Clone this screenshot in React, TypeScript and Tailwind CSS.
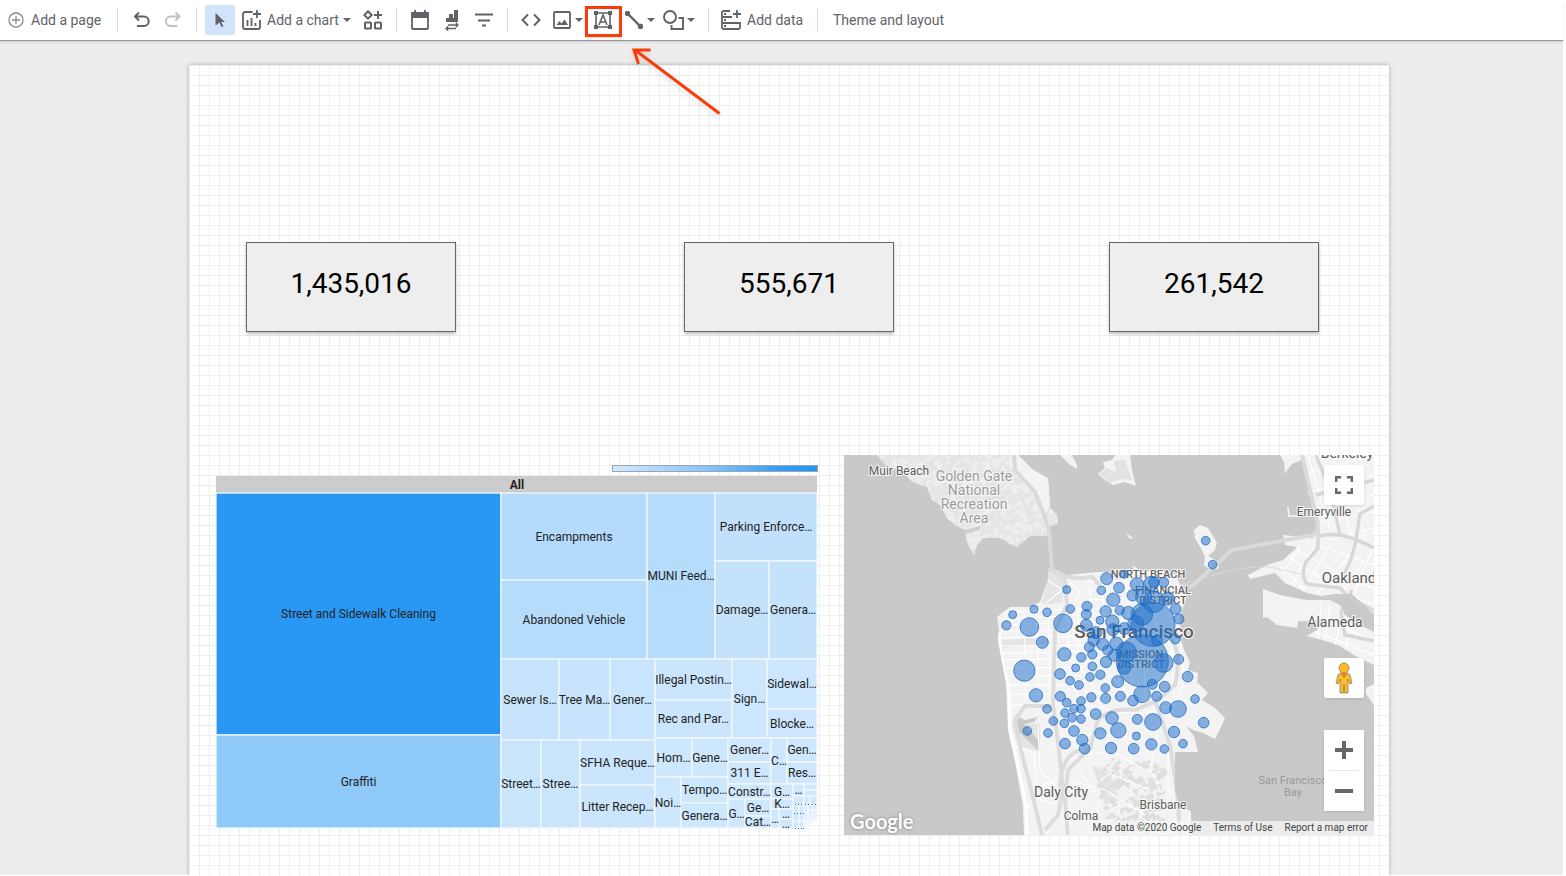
import type { ReactNode } from "react";

type Cell = [x1: number, y1: number, x2: number, y2: number, label: string, fill: string];

const CELLS: Cell[] = [
  [216, 493, 501, 735, "Street and Sidewalk Cleaning", "#2998f5"],
  [216, 735, 501, 828, "Graffiti", "#8fcaf9"],
  [501, 493, 647, 580, "Encampments", "#b4dbfc"],
  [501, 580, 647, 659, "Abandoned Vehicle", "#b6dcfc"],
  [647, 493, 715, 659, "MUNI Feed…", "#b6dcfc"],
  [715, 493, 817, 561, "Parking Enforce…", "#c1e0fc"],
  [715, 561, 769, 659, "Damage…", "#c5e2fb"],
  [769, 561, 817, 659, "Genera…", "#c5e2fb"],
  [501, 659, 559, 740, "Sewer Is…", "#c7e3fb"],
  [559, 659, 610, 740, "Tree Ma…", "#c8e4fc"],
  [610, 659, 655, 740, "Gener…", "#c9e4fd"],
  [501, 740, 541, 828, "Street…", "#c9e5fb"],
  [541, 740, 580, 828, "Stree…", "#c9e5fb"],
  [580, 740, 655, 785, "SFHA Reque…", "#cae5fc"],
  [580, 785, 655, 828, "Litter Recep…", "#cae5fc"],
  [655, 659, 732, 700, "Illegal Postin…", "#cbe5fd"],
  [655, 700, 732, 738, "Rec and Par…", "#cbe5fd"],
  [732, 659, 767, 738, "Sign…", "#cce6fd"],
  [767, 659, 817, 709, "Sidewal…", "#cce6fd"],
  [767, 709, 817, 738, "Blocke…", "#cde6fd"],
  [655, 738, 692, 777, "Hom…", "#cde7fd"],
  [692, 738, 728, 777, "Gene…", "#cde7fd"],
  [655, 777, 681, 828, "Noi…", "#cde7fd"],
  [681, 777, 728, 803, "Tempo…", "#cde7fd"],
  [681, 803, 728, 828, "Genera…", "#cde7fd"],
  [728, 738, 771, 762, "Gener…", "#cfe7fd"],
  [728, 762, 771, 784, "311 E…", "#cfe7fd"],
  [771, 738, 787, 784, "C…", "#cfe7fd"],
  [787, 738, 817, 762, "Gen…", "#cfe7fd"],
  [787, 762, 817, 784, "Res…", "#cfe7fd"],
  [728, 784, 771, 799, "Constr…", "#cfe7fd"],
  [728, 799, 745, 828, "G…", "#cfe7fd"],
  [745, 799, 771, 816, "Ge…", "#cfe7fd"],
  [745, 816, 771, 828, "Cat…", "#cfe7fd"],
  [771, 784, 793, 799, "G…", "#d0e8fd"],
  [771, 799, 793, 809, "K…", "#d0e8fd"],
  [771, 809, 779, 828, "…", "#d0e8fd"],
  [779, 809, 793, 819, "…", "#d0e8fd"],
  [779, 819, 793, 828, "…", "#d0e8fd"],
  [793, 784, 804, 796, "…", "#d0e8fd"],
  [793, 796, 804, 805, "", "#d0e8fd"],
  [804, 784, 817, 790, "", "#d0e8fd"],
  [804, 790, 817, 796, "", "#d0e8fd"],
  [804, 796, 810, 805, "", "#d0e8fd"],
  [810, 796, 817, 805, "", "#d0e8fd"],
  [793, 805, 799, 821, "", "#d0e8fd"],
  [799, 805, 804, 821, "", "#d0e8fd"],
  [793, 821, 799, 828, "", "#d0e8fd"],
  [799, 821, 804, 828, "", "#d0e8fd"],
  [804, 805, 808, 813, "", "#d3eafd"],
  [808, 805, 813, 810, "", "#d3eafd"],
  [813, 805, 817, 810, "", "#d3eafd"],
  [808, 810, 812, 816, "", "#dceefe"],
  [812, 810, 817, 814, "", "#dceefe"],
  [804, 813, 808, 821, "", "#dceefe"],
  [808, 816, 812, 822, "", "#e6f3fe"],
  [812, 814, 817, 820, "", "#e6f3fe"],
  [804, 821, 809, 828, "", "#eef7ff"],
];

function Treemap() {
  return (
    <svg viewBox="216 455 602 380" className="w-full" role="img" aria-label="Requests by category">
      <defs>
        <linearGradient id="scale">
          <stop offset="0" stopColor="#d4e9fc" />
          <stop offset="0.5" stopColor="#7fc1f9" />
          <stop offset="0.8" stopColor="#349ff6" />
          <stop offset="1" stopColor="#2196f3" />
        </linearGradient>
      </defs>
      <rect x="612.5" y="465.5" width="205" height="6" fill="url(#scale)" stroke="#9aa5b0" />
      <rect x="216" y="476" width="601" height="17" fill="#ccc" />
      <text x="517" y="489" textAnchor="middle" className="fill-[#222] font-[Roboto] text-[12px] font-bold">All</text>
      {CELLS.map(([x1, y1, x2, y2, , fill]) => (
        <rect key={`${x1}-${y1}`} x={x1} y={y1} width={x2 - x1} height={y2 - y1} fill={fill} stroke="#f1f8ff" strokeWidth="1.3" />
      ))}
      {CELLS.map(([x1, y1, x2, y2, label]) =>
        label ? (
          <text key={`${x1}-${y1}`} x={(x1 + x2) / 2} y={(y1 + y2) / 2 + 4} textAnchor="middle" className="fill-[#222] font-[Roboto] text-[12px]">
            {label}
          </text>
        ) : null
      )}
      <g fill="#555">
        {[795, 798, 801, 805, 808, 812, 815].map((x) => <rect key={x} x={x} y="804" width="1" height="1" />)}
        {[794, 797, 800, 803].map((x) => <rect key={x} x={x} y="813" width="1" height="1" />)}
        {[795, 798, 801, 803].map((x) => <rect key={x} x={x} y="828" width="1" height="1" />)}
      </g>
    </svg>
  );
}

const BUBBLES: [number, number, number][] = [
  [676, -59, 13], [697, 13, 13], [379, 55, 18], [432, 42, 12], [259, 88, 12], [363, 90, 13], [416, 82, 16], [470, 72, 20],
  [512, 70, 22], [521, 65, 16], [550, 66, 15], [399, 118, 20], [457, 105, 17], [490, 110, 24], [520, 125, 32], [562, 115, 20],
  [586, 146, 16], [596, 176, 15], [320, 138, 15], [318, 162, 15], [376, 153, 17], [418, 150, 14], [359, 180, 12], [396, 184, 20],
  [318, 195, 18], [444, 158, 20], [485, 162, 32], [518, 192, 66], [466, 190, 24], [270, 146, 13], [200, 156, 13], [161, 147, 12],
  [97, 163, 12], [78, 195, 14], [147, 200, 28], [248, 189, 28], [186, 246, 18], [327, 260, 15], [340, 240, 17], [367, 252, 18],
  [382, 270, 15], [408, 250, 20], [398, 208, 18], [432, 205, 18], [402, 285, 18], [347, 217, 18], [377, 305, 17], [336, 282, 14],
  [303, 291, 14], [252, 282, 20], [286, 323, 12], [336, 318, 13], [132, 331, 32], [239, 341, 16], [329, 350, 13], [360, 343, 14],
  [269, 361, 13], [296, 374, 13], [375, 383, 13], [412, 364, 18], [486, 302, 78], [438, 275, 30], [550, 308, 28], [432, 322, 20],
  [530, 240, 16], [585, 236, 15], [595, 297, 15], [622, 349, 16], [516, 372, 15], [553, 379, 16], [485, 402, 25], [458, 421, 16],
  [529, 408, 15], [420, 408, 15], [376, 414, 15], [333, 411, 14], [167, 405, 20], [240, 408, 15], [259, 427, 13], [302, 422, 13],
  [281, 445, 13], [302, 445, 13], [200, 446, 13], [254, 458, 13], [275, 472, 13], [302, 476, 13], [252, 489, 13], [219, 482, 13],
  [346, 461, 16], [395, 473, 19], [414, 510, 23], [471, 477, 15], [518, 485, 25], [556, 442, 18], [593, 446, 25], [644, 416, 13],
  [670, 487, 16], [360, 519, 17], [281, 512, 16], [203, 518, 13], [141, 512, 13], [254, 550, 16], [306, 539, 17], [313, 565, 16],
  [392, 563, 17], [468, 527, 12], [460, 565, 16], [513, 552, 17], [552, 566, 13], [581, 515, 17], [608, 550, 13],
];

const MARIN = "M877 455L887 467L902 470L912 482L927 487L932 500L940 505L947 518L955 525L965 530L967 542L974 556L977 545L983 538L1000 538L1010 544L1017 547L1030 536L1047 536L1050 526L1058 524L1057 515L1050 507L1048 478L1033 470L1018 455Z";
const CITY = "M1049 568L1056 570L1067 575L1097 572L1110 572L1134 572L1133 565L1140 571L1160 571L1175 575L1183 590L1186 600L1180 615L1181 640L1184 650L1190 662L1188 670L1198 673L1197 682L1208 693L1202 700L1215 708L1225 718L1220 729L1215 739L1203 733L1193 730L1186 726L1194 736L1198 752L1175 752L1175 792L1180 807L1191 811L1191 835L1024 835L1023 807L1016 767L1008 730L1006 683L998 640L999 630L997 617L1010 607L1030 607L1040 602L1048 580Z";
const EAST = "M1302 455L1308 480L1308 493L1313 500L1318 527L1313 538L1283 535L1285 545L1297 547L1283 560L1267 565L1248 575L1250 579L1267 575L1275 573L1285 583L1307 593L1330 598L1345 594L1374 614V455ZM1280 455L1303 455L1302 460L1292 464L1285 473L1284 462Z";
const ALAMEDA = "M1263 589L1280 595L1307 600L1330 600L1340 605L1345 615L1360 625L1374 632V665L1357 657L1340 646L1323 640L1307 636L1317 630L1323 622L1298 621L1297 628L1277 625L1267 617L1263 618ZM1366 688L1374 684V705L1366 694Z";
const ISLANDS = "M1060 455L1070 465L1077 469L1077 465L1072 455ZM1098 474L1105 468L1103 462L1112 460L1115 455H1130L1132 470L1136 486L1125 482L1113 485L1105 480ZM1126 533L1133 538L1130 539ZM1200 525L1208 528L1217 543L1215 550L1208 556L1215 560L1219 565L1218 569L1208 568L1204 565L1205 557L1203 552L1195 538L1194 530Z";

// Deterministic hillside patches, so the terrain is stable between renders.
function patches(count: number, x0: number, y0: number, w: number, h: number) {
  let seed = 17;
  const next = () => (seed = (seed * 16807) % 2147483647) / 2147483647;
  let d = "";
  for (let i = 0; i < count; i++) {
    const x = Math.round(x0 + next() * w);
    const y = Math.round(y0 + next() * h);
    d += `M${x} ${y}l${Math.round(next() * 7)} ${Math.round(-next() * 6)}l${Math.round(1 + next() * 4)} ${Math.round(next() * 4)}l${Math.round(-next() * 9)} ${Math.round(2 + next() * 4)}z`;
  }
  return d;
}

const HILLS = patches(420, 880, 455, 175, 95);
const SOUTH_HILLS = patches(130, 1098, 762, 60, 70);

function Label({ x, y, className, children }: { x: number; y: number; className: string; children: ReactNode }) {
  return (
    <text x={x} y={y} textAnchor="middle" stroke="#f7f7f7" strokeWidth="2" strokeLinejoin="round" paintOrder="stroke" className={`font-[Roboto] ${className}`}>
      {children}
    </text>
  );
}

function MapDrawing() {
  return (
    <svg viewBox="844 455 530 380" className="block w-full" role="img" aria-label="Map of San Francisco">
      <defs>
        <clipPath id="marin"><path d={MARIN} /></clipPath>
        <clipPath id="city"><path d={CITY} /></clipPath>
        <clipPath id="east"><path d={EAST + ALAMEDA} /></clipPath>
      </defs>
      <rect x="844" y="455" width="530" height="380" fill="#c9c9c9" />
      <path d={MARIN} fill="#e5e5e5" />
      <g clipPath="url(#marin)">
        <path d={HILLS} fill="#eee" />
        <path d="M1018 455L1048 480L1052 500L1045 515L1035 497L1025 480L1010 466V455Z" fill="#f3f3f3" />
        <path d="M964 530L980 526V530L966 534Z" fill="#cfcfcf" />
      </g>
      <path d={CITY + EAST + ALAMEDA + ISLANDS} fill="#f3f3f3" />
      <path d="M1100 474L1107 468L1116 472L1114 461L1125 460L1132 480L1120 479L1110 483Z" fill="#e2e2e2" />
      <g clipPath="url(#east)">
        <g stroke="#fff" strokeWidth="1.2" fill="none">
          <path d="M1308 455L1330 530M1318 455L1341 535M1333 455L1352 540M1346 455L1365 540M1300 475L1374 455M1306 493L1374 475M1310 510L1374 495M1313 524L1374 512M1330 540L1374 528M1318 545L1374 565M1297 550L1350 580L1374 588M1290 558L1340 590L1374 605M1280 566L1305 590M1300 546L1282 575M1313 548L1292 584M1330 545L1303 592M1350 555L1315 596M1365 560L1340 596M1374 545L1352 598" />
          <path d="M1321 604L1318 640M1330 605L1325 642M1342 616L1335 646M1352 625L1345 650M1310 630L1374 655M1320 616L1374 642" />
        </g>
        <path d="M1318 528L1318 548L1306 562Q1300 575 1307 584L1340 588L1351 600L1374 610M1320 536Q1340 530 1374 548M1340 535L1330 490L1316 455M1374 506L1360 514L1355 545L1350 562L1341 580M1316 495L1374 480M1352 590L1341 612L1345 635L1374 641" stroke="#d7d7d7" strokeWidth="3.4" fill="none" />
        <path d="M1263 588L1305 600L1330 600L1347 598L1374 622V614L1352 594L1335 594L1308 598L1270 586Z" fill="#c9c9c9" />
      </g>
      <path d="M1190 588L1232 550L1313 535Q1320 530 1317 520L1302 455" stroke="#dadada" strokeWidth="4" fill="none" />
      <path d="M1173 587L1210 576Q1245 565 1270 567L1300 574" stroke="#dadada" fill="none" />
      <path d="M1288 507L1289 516H1300" stroke="#eee" strokeWidth="2" fill="none" />
      <g clipPath="url(#city)">
        <path d="M1049 570L1065 578L1062 603L1042 604ZM998 640L1050 637V645L1000 648ZM1010 722L1040 724V752L1018 745ZM1092 765L1110 773L1120 800L1105 805ZM1110 575L1125 574V580H1110Z" fill="#e5e5e5" />
        <path d={SOUTH_HILLS} fill="#dfdfdf" />
        <path d="M1016 716L1025 720L1038 717L1034 722L1024 724L1038 740V750L1026 739L1018 731Z" fill="#c9c9c9" />
        <g stroke="#fff" strokeWidth="1.1" fill="none">
          <path d="M998 613L1090 608M999 619L1110 614M1000 625L1140 620M1000 631L1150 628M1001 638L1090 636M1001 646L1100 645M1002 653L1110 651M1003 660L1080 658M1004 668L1095 667M1005 676L1080 676M1006 685L1085 685M1007 695L1060 693M1008 705L1060 704" />
          <path d="M1012 608V625M1024 607L1026 700M1036 606L1039 702M1048 607L1050 690M1066 610L1070 660M1078 607V660M1090 585L1093 660M1102 578L1106 660M1114 574L1120 700M1126 572L1133 700M1140 572L1146 710M1154 573L1160 720M1168 574L1174 700" />
          <path d="M1085 582L1170 578M1085 591L1182 586M1085 600L1183 596M1090 609L1180 605M1048 580L1062 590L1046 603M1070 583L1080 592L1075 602" />
          <path d="M1056 660Q1075 655 1088 680T1120 690M1057 675Q1072 680 1080 700T1100 720M1052 715Q1075 700 1110 710T1180 700M1042 735L1070 720L1100 710M1055 745L1090 735L1145 738M1100 665L1125 690L1140 720M1085 690L1118 720L1130 750M1012 745L1034 753L1038 795L1022 815M1038 725L1040 770L1055 785M1065 760L1110 750L1145 770M1030 790L1060 778L1105 790L1145 815M1080 772L1100 800L1090 835M1100 780L1110 774L1150 790M1160 720L1150 770L1160 790M1168 745L1168 790L1180 805M1120 805L1090 820M1040 800L1070 808L1070 835M1180 640L1185 680L1170 715" />
        </g>
        <path d="M999 632L1001 655L1009 690L1010 730L1018 765L1026 805L1027 835" stroke="#fff" strokeWidth="3" fill="none" />
        <path d="M1050 569L1065 579L1067 605L1055 630L1053 705L1059 750L1063 790L1058 815L1045 830M1050 570Q1070 581 1092 577L1100 585M1053 706H1025L1015 720L1021 750L1030 785L1036 810L1042 835M1068 835L1065 800L1068 770L1090 748L1098 720Q1110 707 1135 710L1158 700L1175 685Q1182 655 1172 640M1060 790Q1060 756 1080 750M1155 700L1170 745L1177 790L1180 835" stroke="#dcdcdc" strokeWidth="4" fill="none" />
      </g>
      <path d="M1014 455L1015 470L1035 492L1043 512L1049 530L1052 570" stroke="#d9d9d9" strokeWidth="4" fill="none" />

      <Label x={899} y={475} className="fill-[#5c5c5c] text-[12px]">Muir Beach</Label>
      <g>
        <Label x={974} y={481} className="fill-[#9b9b9b] text-[14px]">Golden Gate</Label>
        <Label x={974} y={495} className="fill-[#9b9b9b] text-[14px]">National</Label>
        <Label x={974} y={509} className="fill-[#9b9b9b] text-[14px]">Recreation</Label>
        <Label x={974} y={523} className="fill-[#9b9b9b] text-[14px]">Area</Label>
      </g>
      <Label x={1347} y={458} className="fill-[#5c5c5c] text-[14px]">Berkeley</Label>
      <Label x={1324} y={516} className="fill-[#5c5c5c] text-[12px]">Emeryville</Label>
      <Label x={1349} y={583} className="fill-[#5c5c5c] text-[15px]">Oakland</Label>
      <Label x={1335} y={627} className="fill-[#5c5c5c] text-[14px]">Alameda</Label>
      <Label x={1148} y={578} className="fill-[#666] text-[11px] font-medium">NORTH BEACH</Label>
      <Label x={1163} y={594} className="fill-[#666] text-[11px] font-medium">FINANCIAL</Label>
      <Label x={1163} y={604} className="fill-[#666] text-[11px] font-medium">DISTRICT</Label>
      <Label x={1134} y={638} className="fill-[#5c5c5c] text-[19px] font-medium">San Francisco</Label>
      <Label x={1141} y={658} className="fill-[#666] text-[11px] font-medium">MISSION</Label>
      <Label x={1141} y={668} className="fill-[#666] text-[11px] font-medium">DISTRICT</Label>
      <Label x={1061} y={797} className="fill-[#5c5c5c] text-[14px]">Daly City</Label>
      <Label x={1081} y={820} className="fill-[#5c5c5c] text-[12px]">Colma</Label>
      <Label x={1163} y={809} className="fill-[#5c5c5c] text-[12px]">Brisbane</Label>
      <text x="1293" y="784" textAnchor="middle" className="fill-[#999] font-[Roboto] text-[11px]">San Francisco</text>
      <text x="1293" y="796" textAnchor="middle" className="fill-[#999] font-[Roboto] text-[11px]">Bay</text>

      <g transform="translate(980 560) scale(0.33333)" fill="#1f6fca" fillOpacity="0.52" stroke="#1f69c6" strokeOpacity="0.75" strokeWidth="3">
        {BUBBLES.map(([x, y, r]) => <circle key={`${x},${y}`} cx={x + 1} cy={y + 1} r={r} />)}
      </g>
    </svg>
  );
}

function GeoMap() {
  const control = "flex h-10 w-10 items-center justify-center bg-white";
  return (
    <div className="relative h-[380px] overflow-hidden">
      <MapDrawing />
      <span className="absolute bottom-0 left-[6px] font-[Lato] text-[20px] leading-[28px] font-bold text-white [text-shadow:0_0_3px_#777]">Google</span>
      <div className="absolute top-[10px] right-[10px] bottom-6 flex flex-col">
        <button aria-label="Toggle fullscreen view" className={`${control} rounded-xs shadow`}>
          <svg width="18" height="18" viewBox="0 0 18 18" fill="none" stroke="#666" strokeWidth="2.4"><path d="M1.2 6V1.2H6M12 1.2h4.800V6M16.800 12v4.800H12M6 16.800H1.200V12" /></svg>
        </button>
        <button aria-label="Street View" className={`${control} mt-auto mb-8 rounded-xs shadow`}>
          <svg width="18" height="32" viewBox="0 0 18 32" fill="#fbbc2c" stroke="#8a7440" strokeWidth="0.7">
            <path d="M5 11h8l2 2 2 8-2 1-2-5v14H9.500v-8h-1v8H5V17l-2 5-2-1 2-8z" />
            <circle cx="9" cy="6" r="5" />
            <path d="M5.500 11.300h7L9 16z" fill="#e5812d" stroke="none" />
          </svg>
        </button>
        <div className="flex flex-col items-center rounded-xs bg-white shadow">
          <button aria-label="Zoom in" className={control}>
            <svg width="18" height="18" viewBox="0 0 18 18" fill="#666"><path d="M7 0h4v7h7v4h-7v7H7v-7H0V7h7z" /></svg>
          </button>
          <span className="h-px w-[30px] bg-[#e6e6e6]" />
          <button aria-label="Zoom out" className={control}>
            <svg width="18" height="4" viewBox="0 0 18 4" fill="#666"><path d="M0 0h18v4H0z" /></svg>
          </button>
        </div>
      </div>
      <div className="absolute right-0 bottom-0 flex h-[14px] items-center gap-3 bg-[#f5f5f5]/80 pr-[6px] pl-1 text-[10px] leading-[14px] whitespace-nowrap text-[#444]">
        <span>Map data ©2020 Google</span>
        <a href="#terms">Terms of Use</a>
        <a href="#report">Report a map error</a>
      </div>
    </div>
  );
}

function Icon({ children }: { children: ReactNode }) {
  return (
    <svg width="24" height="24" viewBox="0 0 24 24" fill="none" stroke="currentColor" strokeWidth="2" className="shrink-0" aria-hidden="true">
      {children}
    </svg>
  );
}

function Caret() {
  return <svg width="8" height="4" viewBox="0 0 8 4" fill="currentColor" className="shrink-0" aria-hidden="true"><path d="M0 0h8L4 4z" /></svg>;
}

function Divider() {
  return <span className="h-6 w-px shrink-0 bg-[#dadce0]" />;
}

function Group({ children }: { children: ReactNode }) {
  return <div className="flex h-8 shrink-0 items-center px-[7px]">{children}</div>;
}

function ToolButton({ label, children }: { label: string; children: ReactNode }) {
  return <button aria-label={label} className="flex h-8 w-8 items-center justify-center">{children}</button>;
}

function Toolbar() {
  return (
    <header className="relative z-10 flex h-[41px] shrink-0 items-center border-b border-[#999] bg-white text-[14px] leading-[20px] whitespace-nowrap text-[#5f6368] shadow-sm">
      <button className="flex h-8 w-[117px] shrink-0 items-center gap-[7px] pl-2">
        <svg width="16" height="16" viewBox="0 0 16 16" fill="none" stroke="#8b8b8b" strokeWidth="1.300" aria-hidden="true"><circle cx="8" cy="8" r="7" /><path d="M8 4v8M4 8h8" /></svg>
        Add a page
      </button>
      <Divider />
      <Group>
        <ToolButton label="Undo"><Icon><path d="M10 4.500L6 8.500l4 4M6.500 8.500H15a4.700 4.700 0 0 1 0 9.400H8" /></Icon></ToolButton>
        <button aria-label="Redo" disabled className="flex h-8 w-8 items-center justify-center text-[#c0c1c3]"><Icon><path d="M14.500 4.500l4 4-4 4M18 8.500H9.500a4.700 4.700 0 0 0 0 9.400H16.500" /></Icon></button>
      </Group>
      <Divider />
      <Group>
        <button aria-label="Select" className="mx-px flex h-[30px] w-[30px] items-center justify-center rounded-xs bg-[#d2e3fc]">
          <svg width="10" height="14" viewBox="0 0 10 14" fill="currentColor" aria-hidden="true"><path d="M.500 0l9.500 9H6.200l2.200 4.200-1.900.8L4.500 9.600l-4 3z" /></svg>
        </button>
        <button className="flex h-8 w-[121px] items-center pl-[6px]">
          <svg width="20" height="20" viewBox="0 0 20 20" fill="none" stroke="currentColor" strokeWidth="1.800" className="mr-[5px] shrink-0" aria-hidden="true">
            <path d="M10.500 2H3a2 2 0 0 0-2 2v13a2 2 0 0 0 2 2h13a2 2 0 0 0 2-2v-7M15 0v8M11 4h8" /><path d="M5.500 10v6M9.500 8v8M13.500 13v3" />
          </svg>
          <span className="mr-1">Add a chart</span>
          <Caret />
        </button>
        <ToolButton label="Community visualizations">
          <svg width="20" height="20" viewBox="0 0 20 20" fill="none" stroke="currentColor" strokeWidth="2" aria-hidden="true">
            <path d="M5 1.300l3.700 3.700L5 8.700 1.300 5zM15 1v8M11 5h8" />
            <rect x="2" y="12.500" width="6" height="6" rx="0.500" /><rect x="12" y="12.500" width="6" height="6" rx="0.500" />
          </svg>
        </ToolButton>
      </Group>
      <Divider />
      <Group>
        <ToolButton label="Date range"><svg width="18" height="20" viewBox="0 0 18 20" fill="none" stroke="currentColor" strokeWidth="1.800" aria-hidden="true"><rect x="1" y="3" width="16" height="16" rx="1" /><path d="M1 3h16v4H1z" fill="currentColor" /><path d="M4 0v3M14 0v3" /></svg></ToolButton>
        <ToolButton label="Data control">
          <svg width="14" height="22" viewBox="0 0 14 22" fill="currentColor" aria-hidden="true">
            <path d="M1 9h3.500v4H1zM4 5h4v8H4zM9 1h4v12H9zM6 9h4v4H6z" />
            <path d="M3 16h10M10.800 13.800l2.200 2.200-2.200 2.200M11 19.500H1M3.200 17.300L1 19.500l2.200 2.200" fill="none" stroke="currentColor" strokeWidth="1.300" />
          </svg>
        </ToolButton>
        <ToolButton label="Filter control"><Icon><path d="M3 6.500h18M6 12.500h12M10 17.500h4" strokeWidth="1.800" /></Icon></ToolButton>
      </Group>
      <Divider />
      <Group>
        <ToolButton label="URL embed"><Icon><path d="M9 6.500L3.500 12 9 17.500M15 6.500l5.500 5.500-5.500 5.500" /></Icon></ToolButton>
        <button aria-label="Image" className="flex h-8 w-10 items-center gap-1 pl-[6px]">
          <svg width="18" height="18" viewBox="0 0 18 18" fill="none" stroke="currentColor" strokeWidth="1.800" className="shrink-0" aria-hidden="true"><rect x="1" y="1" width="16" height="16" rx="1" /><path d="M3.500 14l3-4 2 2.500 3-4L15 14z" fill="currentColor" stroke="none" /></svg>
          <Caret />
        </button>
        <div className="relative">
          <ToolButton label="Text">
            <svg width="18" height="18" viewBox="0 0 18 18" fill="none" stroke="currentColor" strokeWidth="1.600" aria-hidden="true">
              <path d="M2 2h14v14H2z" /><path d="M5 14L9 4l4 10M6.500 11h5" />
              <path d="M0 0h4v4H0zM14 0h4v4h-4zM0 14h4v4H0zM14 14h4v4h-4z" fill="currentColor" stroke="none" />
            </svg>
          </ToolButton>
          <span className="pointer-events-none absolute top-[2px] -left-[2px] h-[31px] w-[37px] border-3 border-[#fa3c0a] shadow" />
          <svg width="96" height="76" viewBox="0 0 96 76" fill="none" stroke="#fa3c0a" strokeWidth="3" className="pointer-events-none absolute top-[41px] left-[42px] drop-shadow-md" aria-hidden="true">
            <path d="M90.500 68.500L6 5M21.500 5H5L9.500 19" />
          </svg>
        </div>
        <button aria-label="Line" className="flex h-8 w-[41px] items-center gap-1 pl-[6px]">
          <svg width="18" height="18" viewBox="0 0 18 18" fill="currentColor" stroke="currentColor" strokeWidth="2.400" className="shrink-0" aria-hidden="true"><path d="M2 2l14 14" /><circle cx="2.500" cy="2.500" r="1.500" /><circle cx="15.500" cy="15.500" r="1.500" /></svg>
          <Caret />
        </button>
        <button aria-label="Shape" className="flex h-8 w-[41px] items-center gap-[3px] pl-[3px]">
          <svg width="21" height="20" viewBox="0 0 21 20" fill="none" stroke="currentColor" strokeWidth="1.900" className="shrink-0" aria-hidden="true"><circle cx="7" cy="7" r="6" /><path d="M15.500 8H20v11H8.500v-4" /></svg>
          <Caret />
        </button>
      </Group>
      <Divider />
      <Group>
        <button className="flex h-8 w-[94px] items-center gap-[6px] pl-[5px]">
          <svg width="20" height="20" viewBox="0 0 20 20" fill="none" stroke="currentColor" strokeWidth="1.800" className="shrink-0" aria-hidden="true">
            <path d="M9 1H2.500A1.500 1.500 0 0 0 1 2.500v15A1.500 1.500 0 0 0 2.500 19h15a1.500 1.500 0 0 0 1.500-1.500V13H1M1 7h10M16 0v8M12 4h8" /><path d="M3 4h2M3 10h2M3 16h2" />
          </svg>
          Add data
        </button>
      </Group>
      <Divider />
      <Group><button className="flex h-8 items-center px-2">Theme and layout</button></Group>
    </header>
  );
}

function Scorecard({ value }: { value: string }) {
  return (
    <div className="flex h-[90px] w-[210px] justify-center border border-[#666] bg-[#eee] pt-6 text-[28px] leading-[34px] text-black shadow-[0_2px_3px_rgba(0,0,0,0.25)]">{value}</div>
  );
}

export default function App() {
  return (
    <div className="flex min-h-screen flex-col bg-white pr-[3px] pb-px font-[Roboto,sans-serif]">
      <Toolbar />
      <main className="flex flex-1 justify-center overflow-hidden bg-[#ededed] pt-6 pl-[15px]">
        <div className="w-full max-w-[1200px] bg-white bg-[linear-gradient(to_right,#eee_1px,transparent_1px),linear-gradient(to_bottom,#eee_1px,transparent_1px)] bg-size-[10px_10px] shadow-[0_0_4px_rgba(0,0,0,0.3)]">
          <div className="grid grid-cols-[438fr_425fr_210px] pt-[177px] pr-[70px] pl-[57px]">
            <Scorecard value="1,435,016" />
            <Scorecard value="555,671" />
            <Scorecard value="261,542" />
          </div>
          <div className="mt-[123px] grid grid-cols-[602fr_530fr] items-start gap-[26px] pr-[15px] pb-10 pl-[27px]">
            <Treemap />
            <GeoMap />
          </div>
        </div>
      </main>
    </div>
  );
}
